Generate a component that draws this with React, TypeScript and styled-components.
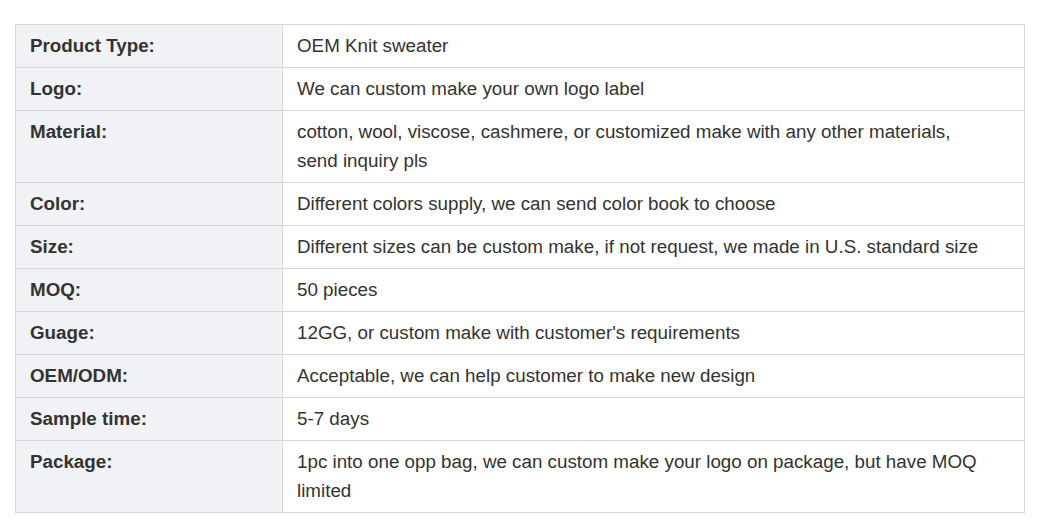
import React from 'react'
import styled, { createGlobalStyle } from 'styled-components'

const GlobalStyle = createGlobalStyle`
  html, body {
    margin: 0;
    padding: 0;
    background: #ffffff;
  }
  body {
    font-family: "Liberation Sans", Arial, sans-serif;
  }
`

const Page = styled.div`
  padding: 24px 35px 18px 15px;
  width: 1060px;
  box-sizing: border-box;
`

const SpecTable = styled.table`
  width: 1010px;
  border-collapse: collapse;
  border: 1px solid #d6d6d6;
  font-family: "Liberation Sans", Arial, sans-serif;
  font-size: 18.8px;
  line-height: 29px;
  color: #333333;
`

const Row = styled.tr`
  border-bottom: 1px solid #d6d6d6;
`

const Label = styled.th`
  width: 267px;
  box-sizing: border-box;
  text-align: left;
  vertical-align: top;
  font-weight: bold;
  background: #f0f2f5;
  border-right: 1px solid #d6d6d6;
  padding: 6px 14px 7px 14px;
`

const Value = styled.td`
  text-align: left;
  vertical-align: top;
  font-weight: normal;
  padding: 6px 30px 7px 14px;
`

const specs: [string, string][] = [
  ['Product Type:', 'OEM Knit sweater'],
  ['Logo:', 'We can custom make your own logo label'],
  ['Material:', 'cotton, wool, viscose, cashmere, or customized make with any other materials, send inquiry pls'],
  ['Color:', 'Different colors supply, we can send color book to choose'],
  ['Size:', 'Different sizes can be custom make, if not request, we made in U.S. standard size'],
  ['MOQ:', '50 pieces'],
  ['Guage:', "12GG, or custom make with customer's requirements"],
  ['OEM/ODM:', 'Acceptable, we can help customer to make new design'],
  ['Sample time:', '5-7 days'],
  ['Package:', '1pc into one opp bag, we can custom make your logo on package, but have MOQ limited'],
]

const App = () => {
  return (
    <>
      <GlobalStyle />
      <Page>
        <SpecTable>
          <tbody>
            {specs.map(([label, value]) => (
              <Row key={label}>
                <Label>{label}</Label>
                <Value>{value}</Value>
              </Row>
            ))}
          </tbody>
        </SpecTable>
      </Page>
    </>
  )
}

export default App
